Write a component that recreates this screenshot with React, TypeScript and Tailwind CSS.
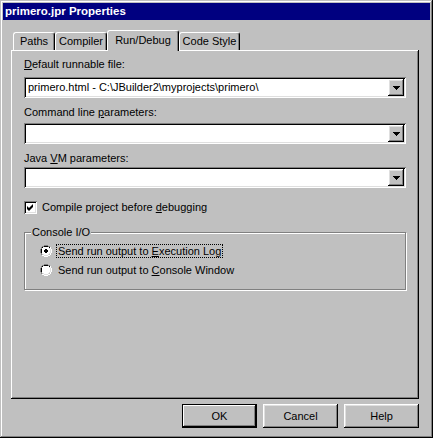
import React from "react";

const raised =
  "shadow-[inset_-1px_-1px_#000,inset_1px_1px_#fff,inset_-2px_-2px_#808080,inset_2px_2px_#dfdfdf]";
const sunken =
  "shadow-[inset_1px_1px_#808080,inset_-1px_-1px_#fff,inset_2px_2px_#000,inset_-2px_-2px_#dfdfdf]";

const Arrow = () => (
  <svg width="7" height="4" viewBox="0 0 7 4">
    <path d="M0 0h7v1H0zM1 1h5v1H1zM2 2h3v1H2zM3 3h1v1H3z" fill="#000" />
  </svg>
);

const Combo = ({ value }: { value?: string }) => (
  <div className={`flex h-[21px] items-center bg-white p-[2px] ${sunken}`}>
    <div className="flex-1 truncate pl-[2px] text-[11px] leading-[17px] text-black">{value}</div>
    <div className={`flex h-[17px] w-[16px] items-center justify-center bg-[#c0c0c0] ${raised}`}>
      <Arrow />
    </div>
  </div>
);

const U = ({ children }: { children: React.ReactNode }) => <span className="underline underline-offset-[1px]">{children}</span>;

const Tab = ({ label, w, active }: { label: string; w: string; active?: boolean }) => (
  <div
    className={`relative flex items-center justify-center rounded-t-[3px] border-l border-t border-r border-l-white border-t-white border-r-black bg-[#c0c0c0] shadow-[inset_-1px_0_#808080] ${w} ${
      active ? "z-10 -mb-[1px] h-[21px] pb-[2px]" : "h-[18px]"
    }`}
  >
    {label}
  </div>
);

const Radio = ({ checked }: { checked?: boolean }) => (
  <svg width="12" height="12" viewBox="0 0 12 12">
    <path d="M4 0h4v1H4zM2 1h2v1H2zM8 1h2v1H8zM1 2h1v2H1zM0 4h1v4H0zM1 8h1v2H1z" fill="#808080" />
    <path d="M4 1h4v1H4zM2 2h2v1H2zM8 2h2v1H8zM1 4h1v4H1zM2 3h1v1H2zM2 8h1v1H2z" fill="#000" />
    <path d="M2 3h8v6H2zM3 2h6v8H3z" fill="#fff" />
    <path d="M10 2h1v2h-1zM11 4h1v4h-1zM10 8h1v2h-1zM8 10h2v1H8zM4 11h4v1H4zM2 10h2v1H2z" fill="#fff" />
    <path d="M10 4h1v4h-1zM9 8h1v1H9zM8 9h1v1H8zM4 10h4v1H4zM3 9h1v1H3zM9 3h1v1H9z" fill="#dfdfdf" />
    {checked && <path d="M5 4h2v1H5zM4 5h4v2H4zM5 7h2v1H5z" fill="#000" />}
  </svg>
);

const Button = ({ label, def }: { label: string; def?: boolean }) => (
  <div
    className={`flex h-[24px] w-[75px] items-center justify-center bg-[#c0c0c0] ${
      def
        ? "border border-black shadow-[inset_-1px_-1px_#000,inset_1px_1px_#fff,inset_-2px_-2px_#808080]"
        : raised
    }`}
  >
    {label}
  </div>
);

export default function App() {
  return (
    <div
      className="w-[433px] h-[438px] bg-[#c0c0c0] p-[3px] text-[11px] text-black shadow-[inset_-1px_-1px_#000,inset_1px_1px_#c0c0c0,inset_-2px_-2px_#808080,inset_2px_2px_#fff]"
      style={{ fontFamily: '"Liberation Sans", Arial, sans-serif' }}
    >
      <div className="flex h-[17px] items-center bg-[#000080] pl-[2px] text-[11.5px] font-bold text-white">
        primero.jpr Properties
      </div>

      <div className="pl-[8px] pr-[11px] pt-[10px]">
        <div className="flex h-[20px] items-end pl-[2px]">
          <Tab label="Paths" w="w-[42px]" />
          <Tab label="Compiler" w="w-[52px]" />
          <Tab label="Run/Debug" w="w-[72px]" active />
          <Tab label="Code Style" w="w-[61px]" />
        </div>

        <div className="h-[349px] bg-[#c0c0c0] px-[13px] pt-[7px] shadow-[inset_-1px_-1px_#000,inset_1px_1px_#fff,inset_-2px_-2px_#808080]">
          <div className="leading-[14px]">
            <U>D</U>efault runnable file:
          </div>
          <div className="mt-[6px]">
            <Combo value="primero.html - C:\JBuilder2\myprojects\primero\" />
          </div>

          <div className="mt-[7px] leading-[14px]">
            Command line <U>p</U>arameters:
          </div>
          <div className="mt-[4px]">
            <Combo />
          </div>

          <div className="mt-[7px] leading-[14px]">
            Java <U>V</U>M parameters:
          </div>
          <div className="mt-[2px]">
            <Combo />
          </div>

          <div className="mt-[12px] flex items-center">
            <div className={`flex h-[13px] w-[13px] items-center justify-center bg-white ${sunken}`}>
              <svg width="7" height="7" viewBox="0 0 7 7">
                <path d="M6 0v3L2 7 0 5V2l2 2z" fill="#000" />
              </svg>
            </div>
            <span className="ml-[5px] leading-[14px]">
              Compile project before <U>d</U>ebugging
            </span>
          </div>

          <div className="relative mt-[18px] h-[58px] border border-[#808080] shadow-[1px_1px_#fff,inset_1px_1px_#fff]">
            <span className="absolute -top-[8px] left-[6px] bg-[#c0c0c0] px-[1px] leading-[14px]">Console I/O</span>
            <div className="flex flex-col gap-[6px] pl-[15px] pt-[11px]">
              <div className="flex items-center">
                <Radio checked />
                <span className="ml-[4px] border border-dotted border-black px-[1px] leading-[12px]">
                  Send run output to <U>E</U>xecution Log
                </span>
              </div>
              <div className="flex items-center">
                <Radio />
                <span className="ml-[5px] px-[1px] leading-[12px]">
                  Send run output to <U>C</U>onsole Window
                </span>
              </div>
            </div>
          </div>
        </div>

        <div className="mt-[5px] flex justify-end gap-[6px]">
          <Button label="OK" def />
          <Button label="Cancel" />
          <Button label="Help" />
        </div>
      </div>
    </div>
  );
}
